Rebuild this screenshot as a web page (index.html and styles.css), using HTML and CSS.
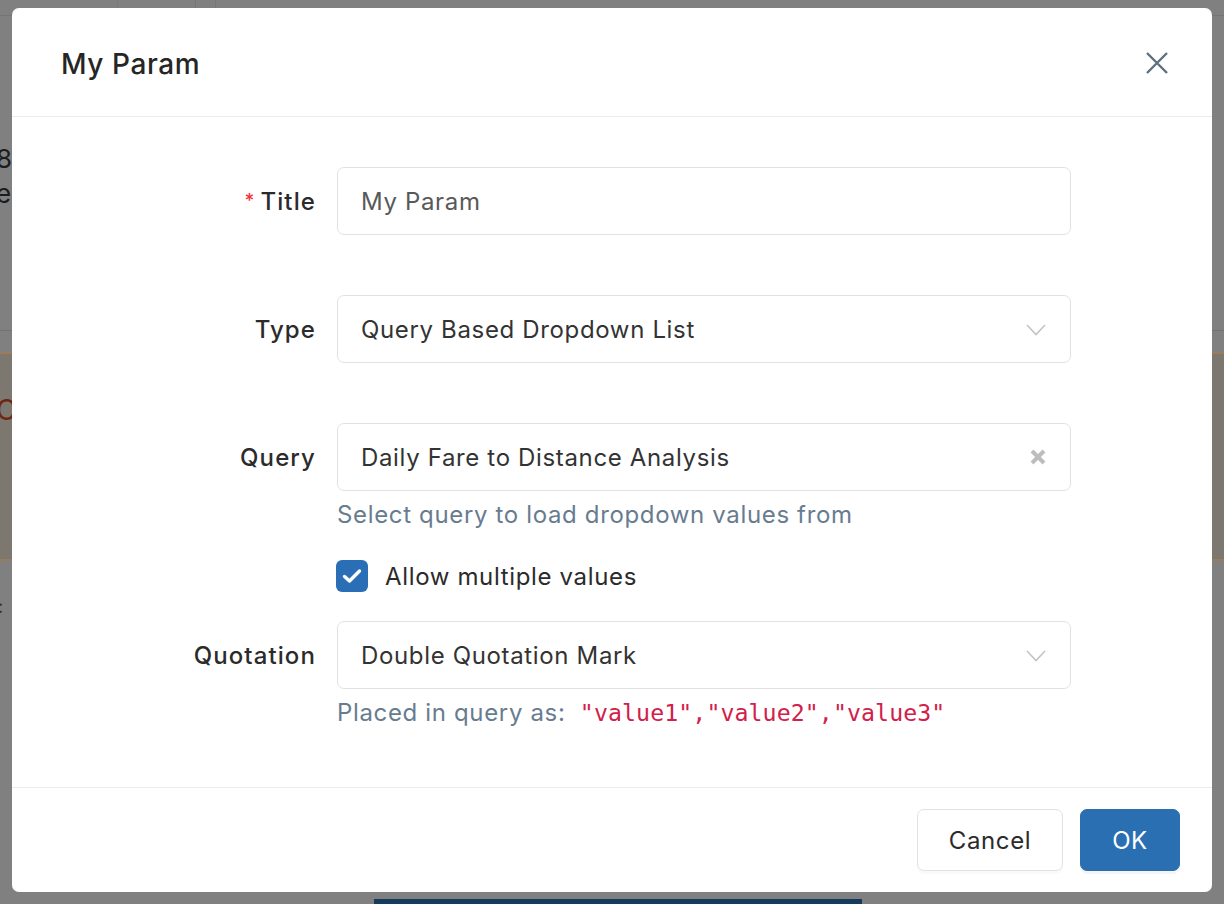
FILE: index.html
```html
<!DOCTYPE html>
<html>
<head>
<meta charset="utf-8">
<title>My Param</title>
<link rel="stylesheet" href="styles.css">
</head>
<body>
<div class="page">
  <div class="bg">
    <div class="bg-top">
      <span class="vl l1"></span><span class="vl l2"></span><span class="vl l3"></span>
    </div>
    <div class="bg-left">
      <div class="bg-num">8</div>
      <div class="bg-e">e</div>
      <div class="bg-rule"></div>
      <div class="bg-alert"><span class="bg-c">C</span></div>
      <div class="bg-colon">:</div>
    </div>
    <div class="bg-bottom"><span class="bg-blue"></span></div>
  </div>

  <div class="modal">
    <div class="modal-header">
      <div class="modal-title">My Param</div>
      <button class="modal-close" aria-label="Close">
        <svg width="24" height="24" viewBox="0 0 24 24"><path d="M2 2 L22 22 M22 2 L2 22" stroke="#5d7081" stroke-width="2.4" fill="none" stroke-linecap="butt"/></svg>
      </button>
    </div>

    <div class="modal-body">
      <div class="form-row row-gap">
        <label class="form-label"><span class="req">*</span>Title</label>
        <div class="form-control">
          <div class="input input-value-muted">My Param</div>
        </div>
      </div>

      <div class="form-row row-gap">
        <label class="form-label">Type</label>
        <div class="form-control">
          <div class="input select">
            <span>Query Based Dropdown List</span>
            <svg class="chev" width="20" height="12" viewBox="0 0 20 12"><path d="M1 1 L10 10.5 L19 1" stroke="#c4c4c4" stroke-width="1.6" fill="none"/></svg>
          </div>
        </div>
      </div>

      <div class="form-row">
        <label class="form-label">Query</label>
        <div class="form-control">
          <div class="input select">
            <span>Daily Fare to Distance Analysis</span>
            <svg class="clear" width="16" height="16" viewBox="0 0 16 16"><path d="M2 2 L14 14 M14 2 L2 14" stroke="#bdbdbd" stroke-width="4" fill="none"/></svg>
          </div>
        </div>
      </div>
      <div class="form-extra">
        <div class="help">Select query to load dropdown values from</div>
        <label class="check">
          <span class="check-box"><svg width="20" height="16" viewBox="0 0 20 16"><path d="M2.5 8.5 L7.5 13 L17.5 3" stroke="#fff" stroke-width="3.4" fill="none" stroke-linecap="round" stroke-linejoin="round"/></svg></span>
          <span>Allow multiple values</span>
        </label>
      </div>

      <div class="form-row">
        <label class="form-label">Quotation</label>
        <div class="form-control">
          <div class="input select">
            <span>Double Quotation Mark</span>
            <svg class="chev" width="20" height="12" viewBox="0 0 20 12"><path d="M1 1 L10 10.5 L19 1" stroke="#c4c4c4" stroke-width="1.6" fill="none"/></svg>
          </div>
        </div>
      </div>
      <div class="form-extra">
        <div class="help">Placed in query as: <code>"value1","value2","value3"</code></div>
      </div>
    </div>

    <div class="modal-footer">
      <button class="btn">Cancel</button>
      <button class="btn btn-primary">OK</button>
    </div>
  </div>
</div>
</body>
</html>
```

FILE: styles.css
```css
* { box-sizing: border-box; }
html, body { margin: 0; padding: 0; }
body {
  font-family: Inter, "Noto Sans", "Liberation Sans", sans-serif;
  background: #808080;
}
.page {
  position: relative;
  width: 1224px;
  height: 904px;
  overflow: hidden;
  background: #808080;
}

/* dimmed page behind the dialog */
.bg { display: flex; flex-direction: column; height: 904px; }
.bg-top {
  height: 16px;
  border-bottom: 1px solid #747474;
  display: flex;
  flex-shrink: 0;
}
.vl { width: 1px; height: 100%; background: #767676; }
.l1 { margin-left: 117px; background: #7a7a7a; }
.l2 { margin-left: 77px; }
.l3 { margin-left: 19px; }
.bg-left { flex: 1; display: flex; flex-direction: column; color: #1c1c1c; font-size: 26px; }
.bg-num { margin-top: 128px; margin-left: -4px; line-height: 30px; }
.bg-e { margin-top: 5px; margin-left: -4px; line-height: 30px; }
.bg-rule { margin-top: 121px; height: 1px; background: #737373; }
.bg-alert {
  margin-top: 21px;
  height: 209px;
  background: #7c7870;
  border-top: 2px solid #9a7c5d;
  border-bottom: 2px solid #9a7c5d;
  padding-top: 42px;
  line-height: 28px;
}
.bg-c { color: #6e2612; margin-left: -4px; font-size: 28px; }
.bg-colon { margin-top: 36px; margin-left: -2px; font-size: 18px; line-height: 20px; color: #333; }
.bg-bottom { height: 5px; display: flex; flex-shrink: 0; }
.bg-blue { margin-left: 374px; width: 488px; background: #163a5c; }

/* modal */
.modal {
  position: absolute;
  left: 12px;
  top: 8px;
  width: 1200px;
  height: 884px;
  background: #fff;
  border-radius: 7px;
  display: flex;
  flex-direction: column;
}
.modal-header {
  height: 109px;
  border-bottom: 1px solid #ebebeb;
  padding: 0 43px 0 49px;
  display: flex;
  align-items: center;
  justify-content: space-between;
  flex-shrink: 0;
}
.modal-title {
  font-size: 28px;
  font-weight: 500;
  color: #262626;
  letter-spacing: 0.6px;
  margin-top: 4px;
}
.modal-close {
  border: 0;
  background: transparent;
  padding: 0;
  width: 24px;
  height: 24px;
  margin-top: 2px;
  display: flex;
}

.modal-body {
  flex: 1;
  padding-top: 50px;
  color: #333;
  font-size: 24px;
  letter-spacing: 0.65px;
}
.form-row {
  display: flex;
  align-items: center;
}
.row-gap { margin-bottom: 60px; }
.form-label {
  width: 304px;
  text-align: right;
  font-size: 24px;
  font-weight: 500;
  color: #2b2b2b;
  letter-spacing: 1.1px;
  flex-shrink: 0;
}
.req {
  color: #f5313c;
  font-size: 19px;
  letter-spacing: 0;
  margin-right: 6px;
  position: relative;
  top: -3px;
}
.form-control { margin-left: 21px; width: 734px; }
.input {
  height: 68px;
  border: 1.5px solid #e2e2e2;
  border-radius: 7px;
  padding: 0 24px 0 23px;
  display: flex;
  align-items: center;
  justify-content: space-between;
  font-size: 24px;
  color: #333;
}
.input-value-muted { color: #595959; }
.chev { margin-top: 2px; }
.clear { margin-right: 0; }

.form-extra { margin-left: 325px; }
.help {
  margin-top: 6px;
  line-height: 36px;
  height: 36px;
  color: #687c90;
  font-size: 24px;
}
.help code {
  font-family: "DejaVu Sans Mono", "Liberation Mono", monospace;
  font-size: 23.2px;
  letter-spacing: 0.1px;
  color: #d2204a;
  margin-left: 7px;
}
.check {
  margin-top: 27px;
  margin-bottom: 29px;
  display: flex;
  align-items: center;
  height: 32px;
  gap: 17px;
  color: #2b2b2b;
}
.check-box {
  width: 32px;
  height: 32px;
  border-radius: 6px;
  background: #2a6fb5;
  display: flex;
  align-items: center;
  justify-content: center;
  margin-left: -1px;
}

.modal-footer {
  height: 105px;
  border-top: 1px solid #ebebeb;
  padding: 21px 32px 0 0;
  display: flex;
  justify-content: flex-end;
  align-items: flex-start;
  gap: 17px;
  flex-shrink: 0;
}
.btn {
  height: 62px;
  border-radius: 7px;
  border: 1.5px solid #e2e2e2;
  background: #fff;
  font-family: inherit;
  font-size: 24px;
  letter-spacing: 0.6px;
  color: #2b2b2b;
  padding: 0;
  width: 146px;
  box-shadow: 0 3px 0 rgba(0,0,0,0.02);
}
.btn-primary {
  width: 100px;
  background: #2a6fb2;
  border-color: #2a6fb2;
  color: #fff;
  box-shadow: 0 3px 0 rgba(0,0,0,0.04);
}
```
